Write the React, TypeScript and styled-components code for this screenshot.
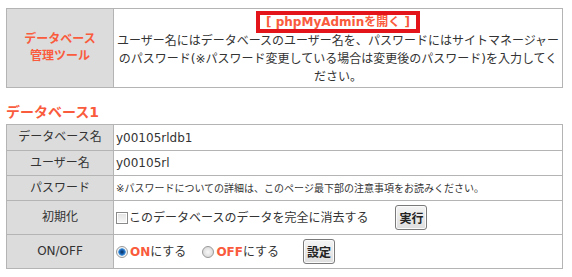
import styled, { createGlobalStyle } from "styled-components";

const GlobalStyle = createGlobalStyle`
  body {
    margin: 0;
    background: #fff;
    font-family: "DejaVu Sans", "Noto Sans CJK JP", sans-serif;
    font-size: 12px;
    color: #333;
  }
`;

const ACCENT = "#f95b3c";
const BORDER = "#b4b4b4";

const Page = styled.div`
  width: 557px;
  padding: 8px 0 0 6px;
`;

const Table = styled.table`
  width: 100%;
  border-collapse: collapse;
  table-layout: fixed;
  border: 1px solid ${BORDER};
`;

const HeadCell = styled.th<{ $accent?: boolean }>`
  width: 106px;
  background: #dcdcdc;
  border: 1px solid ${BORDER};
  font-weight: ${(p) => (p.$accent ? "bold" : "normal")};
  color: ${(p) => (p.$accent ? ACCENT : "#333")};
  text-align: center;
  vertical-align: middle;
  line-height: 17px;
  padding: 0;
`;

const Row = styled.tr<{ $h: number }>`
  height: ${(p) => p.$h}px;
`;

const Cell = styled.td`
  border: 1px solid ${BORDER};
  padding: 0 2px;
  vertical-align: middle;
  line-height: 18px;
`;

const InfoCell = styled(Cell)`
  text-align: center;
  padding: 4px 2px 1px;
`;

const AdminLink = styled.span`
  display: inline-block;
  vertical-align: middle;
  line-height: 14px;
  padding: 0 6px;
  margin-bottom: 2px;
  outline: 4px solid #e4141b;
  color: ${ACCENT};
  font-weight: bold;
  white-space: pre;
`;

const Heading = styled.h2`
  margin: 14px 0 2px;
  font-size: 14px;
  line-height: 20px;
  color: ${ACCENT};
  font-weight: bold;
`;

const Note = styled.span`
  font-size: 10px;
`;

const Inline = styled.div`
  display: flex;
  align-items: center;
`;

const Check = styled.span`
  display: inline-block;
  width: 10px;
  height: 10px;
  border: 1px solid #8a8a8a;
  background: linear-gradient(#e2e2e2, #f8f8f8);
  box-shadow: inset 0 0 0 1px #fff;
  margin-right: 1px;
`;

const Radio = styled.span<{ $on?: boolean }>`
  display: inline-block;
  width: 10px;
  height: 10px;
  border-radius: 50%;
  border: 1px solid #9a9a9a;
  background: ${(p) =>
    p.$on
      ? "radial-gradient(circle, #0a2d5a 0, #1c6bbd 2.5px, #5fa3e0 3.5px, #f4f4f4 4px)"
      : "radial-gradient(circle, #f8f8f8 0, #dcdcdc 5px)"};
  margin-right: 2px;
`;

const Option = styled.label`
  display: inline-flex;
  align-items: center;
  margin-right: 16px;
`;

const Strong = styled.b`
  color: ${ACCENT};
`;

const Button = styled.button<{ $gap: number }>`
  margin-left: ${(p) => p.$gap}px;
  height: 25px;
  padding: 0 3px;
  font-family: "Noto Sans CJK JP", sans-serif;
  font-size: 12px;
  font-weight: bold;
  color: #222;
  border: 1px solid #7a7a7a;
  border-radius: 3px;
  background: linear-gradient(#f4f4f4, #dedede);
  box-shadow: inset 0 0 0 1px #fbfbfb;
`;

export default function App() {
  return (
    <Page>
      <GlobalStyle />
      <Table>
        <tbody>
          <Row $h={79}>
            <HeadCell $accent>
              データベース
              <br />
              管理ツール
            </HeadCell>
            <InfoCell>
              <AdminLink>[ phpMyAdminを開く ]</AdminLink>
              <br />
              ユーザー名にはデータベースのユーザー名を、パスワードにはサイトマネージャーのパスワード(※パスワード変更している場合は変更後のパスワード)を入力してください。
            </InfoCell>
          </Row>
        </tbody>
      </Table>

      <Heading>データベース1</Heading>
      <Table>
        <tbody>
          <Row $h={26}>
            <HeadCell>データベース名</HeadCell>
            <Cell>y00105rldb1</Cell>
          </Row>
          <Row $h={25}>
            <HeadCell>ユーザー名</HeadCell>
            <Cell>y00105rl</Cell>
          </Row>
          <Row $h={25}>
            <HeadCell>パスワード</HeadCell>
            <Cell>
              <Note>
                ※パスワードについての詳細は、このページ最下部の注意事項をお読みください。
              </Note>
            </Cell>
          </Row>
          <Row $h={34}>
            <HeadCell>初期化</HeadCell>
            <Cell>
              <Inline>
                <Check />
                このデータベースのデータを完全に消去する
                <Button $gap={27}>実行</Button>
              </Inline>
            </Cell>
          </Row>
          <Row $h={34}>
            <HeadCell>ON/OFF</HeadCell>
            <Cell>
              <Inline>
                <Option>
                  <Radio $on />
                  <Strong>ON</Strong>にする
                </Option>
                <Option>
                  <Radio />
                  <Strong>OFF</Strong>にする
                </Option>
                <Button $gap={8}>設定</Button>
              </Inline>
            </Cell>
          </Row>
        </tbody>
      </Table>
    </Page>
  );
}
